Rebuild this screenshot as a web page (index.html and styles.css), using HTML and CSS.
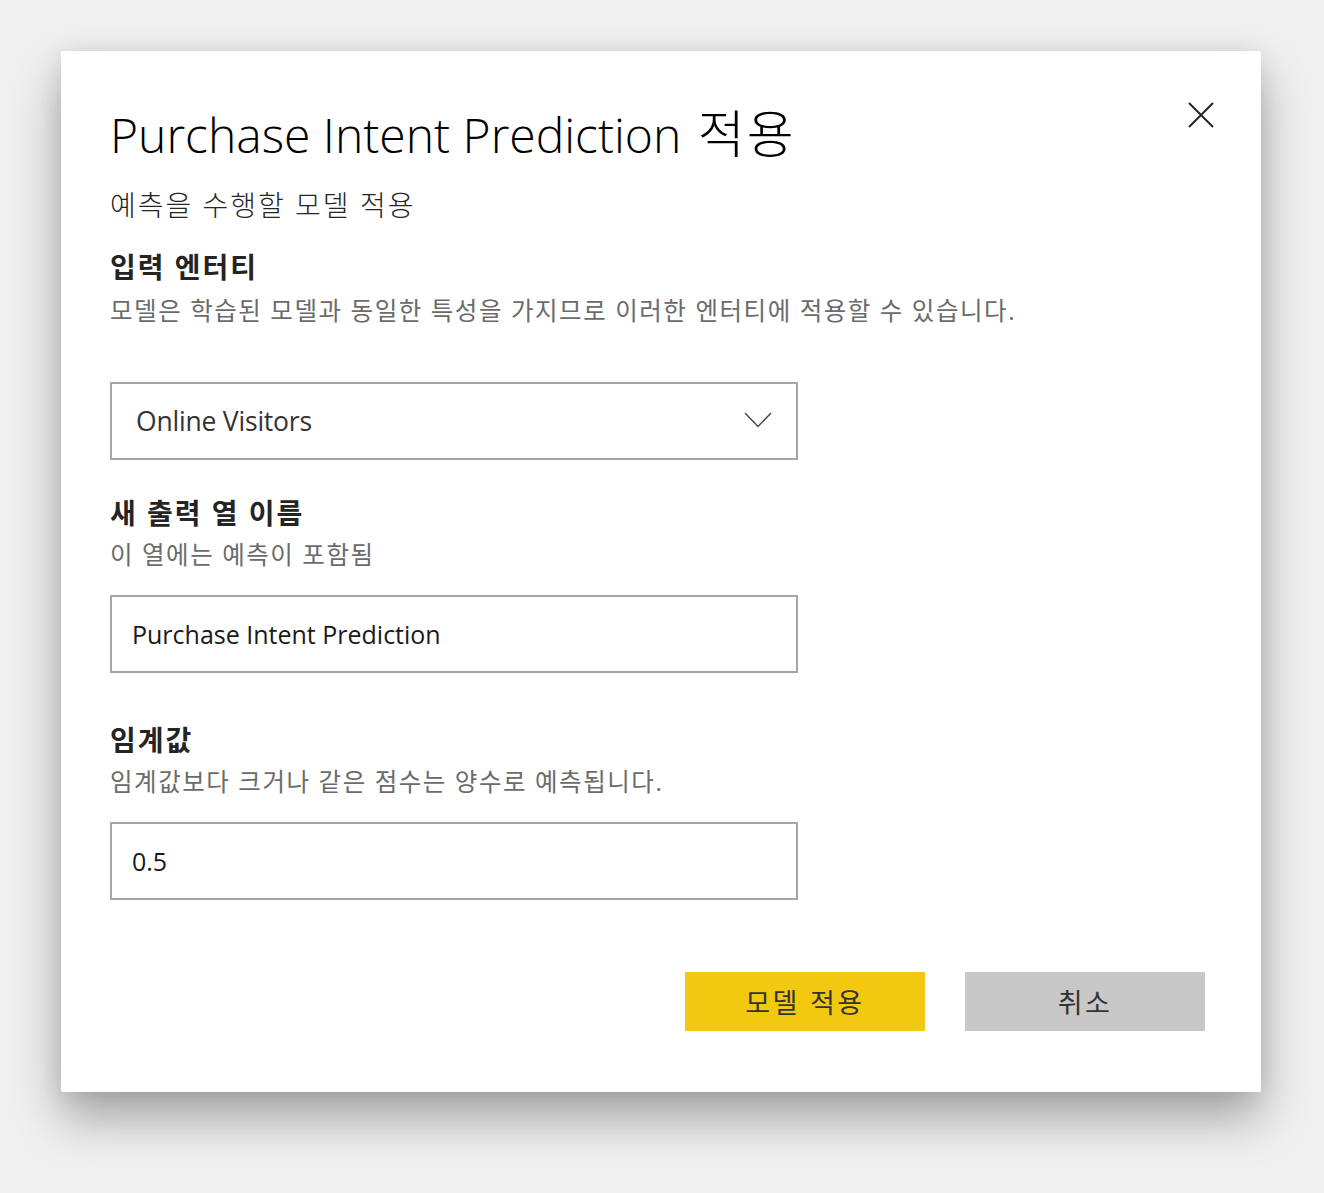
FILE: index.html
```html
<!DOCTYPE html>
<html lang="ko">
<head>
<meta charset="utf-8">
<link rel="stylesheet" href="styles.css">
</head>
<body>
<div class="dialog">
  <button class="close" aria-label="닫기">
    <svg width="26" height="26" viewBox="0 0 26 26"><path d="M1 1 L25 25 M25 1 L1 25" stroke="#252525" stroke-width="2" fill="none"/></svg>
  </button>
  <h1 class="title">Purchase Intent Prediction <span class="title-ko">적용</span></h1>
  <p class="subtitle">예측을 수행할 모델 적용</p>

  <h2 class="heading h-first">입력 엔터티</h2>
  <p class="desc">모델은 학습된 모델과 동일한 특성을 가지므로 이러한 엔터티에 적용할 수 있습니다.</p>
  <div class="field select">
    <span class="select-text">Online Visitors</span>
    <svg class="chevron" width="28" height="16" viewBox="0 0 28 16"><path d="M1 1 L14 14.5 L27 1" stroke="#4a4a4a" stroke-width="1.5" fill="none"/></svg>
  </div>

  <h2 class="heading h-next">새 출력 열 이름</h2>
  <p class="desc desc-short">이 열에는 예측이 포함됨</p>
  <div class="field input"><span class="input-text">Purchase Intent Prediction</span></div>

  <h2 class="heading h-third">임계값</h2>
  <p class="desc desc-short">임계값보다 크거나 같은 점수는 양수로 예측됩니다.</p>
  <div class="field input"><span class="input-text">0.5</span></div>

  <div class="actions">
    <button class="btn btn-primary">모델 적용</button>
    <button class="btn btn-secondary">취소</button>
  </div>
</div>
</body>
</html>
```

FILE: styles.css
```css
html, body {
  margin: 0;
  padding: 0;
}
body {
  background: #f0f0f0;
  width: 1324px;
  height: 1193px;
  overflow: hidden;
  font-family: "Open Sans", "Noto Sans CJK KR", sans-serif;
}
.dialog {
  position: relative;
  box-sizing: border-box;
  margin: 51px 0 0 61px;
  width: 1200px;
  height: 1041px;
  background: #fff;
  border-radius: 2px;
  box-shadow: 0 26px 48px rgba(0, 0, 0, 0.32), 0 0 24px rgba(0, 0, 0, 0.08);
  padding: 52px 56px 0 49px;
}
.close {
  position: absolute;
  top: 51px;
  left: 1127px;
  width: 26px;
  height: 26px;
  padding: 0;
  border: 0;
  background: none;
  display: block;
}
.close svg { display: block; }
.title {
  margin: 0;
  font-size: 48px;
  line-height: 60px;
  font-weight: 300;
  color: #000;
  letter-spacing: 0;
}
.title-ko {
  font-size: 51px;
  letter-spacing: 2px;
  margin-left: 4px;
}
.subtitle {
  margin: 22px 0 0;
  font-size: 28px;
  line-height: 36px;
  font-weight: 300;
  letter-spacing: 2px;
  color: #252525;
}
.heading {
  margin: 0;
  font-size: 28px;
  line-height: 36px;
  font-weight: 700;
  letter-spacing: 2px;
  color: #252423;
}
.h-first { margin-top: 26px; }
.h-next { margin-top: 35px; }
.h-third { margin-top: 49px; }
.desc {
  margin: 10px 0 0;
  font-size: 24.5px;
  line-height: 32px;
  font-weight: 400;
  letter-spacing: 1.55px;
  color: #6b6b6b;
}
.desc-short { margin-top: 8px; }
.field {
  box-sizing: border-box;
  width: 688px;
  height: 78px;
  border: 2px solid #a6a6a6;
  display: flex;
  align-items: center;
}
.select {
  margin-top: 55px;
  padding: 0 24px 0 24px;
  justify-content: space-between;
}
.select-text {
  font-size: 26.5px;
  letter-spacing: -0.2px;
  color: #333;
}
.chevron { display: block; margin-top: -2px; }
.input {
  margin-top: 24px;
  padding: 0 20px;
}
.input-text {
  font-size: 25px;
  color: #1a1a1a;
}
.actions {
  display: flex;
  justify-content: flex-end;
  gap: 40px;
  margin-top: 72px;
}
.btn {
  width: 240px;
  height: 59px;
  border: 0;
  padding: 0;
  font-family: "Noto Sans CJK KR", sans-serif;
  font-size: 27px;
  letter-spacing: 2.5px;
  color: #333;
}
.btn-primary { background: #f2c811; }
.btn-secondary { background: #c8c8c8; }
```
